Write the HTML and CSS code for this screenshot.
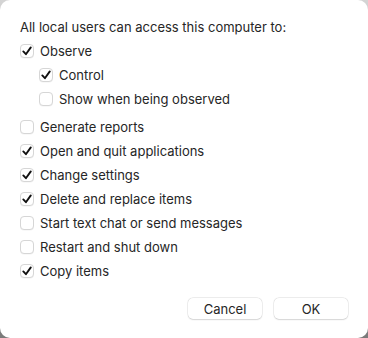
FILE: index.html
```html
<!DOCTYPE html>
<html lang="en">
<head>
    <meta charset="utf-8" />
    <title>Remote Management Access</title>
    <link rel="stylesheet" href="styles.css">
</head>
<body>
<div class="sheet">
    <p class="lead">All local users can access this computer to:</p>
    <ul class="options">
        <li class="opt on">Observe</li>
        <li class="opt sub on">Control</li>
        <li class="opt sub">Show when being observed</li>
        <li class="opt gap">Generate reports</li>
        <li class="opt on">Open and quit applications</li>
        <li class="opt on">Change settings</li>
        <li class="opt on">Delete and replace items</li>
        <li class="opt">Start text chat or send messages</li>
        <li class="opt">Restart and shut down</li>
        <li class="opt on">Copy items</li>
    </ul>
    <div class="actions">
        <button class="btn">Cancel</button>
        <button class="btn">OK</button>
    </div>
</div>
</body>
</html>
```

FILE: styles.css
```css
html, body {
    margin: 0;
    height: 100%;
}
body {
    background: linear-gradient(#d4d4d4, #7a7a7a);
    font-family: Inter, "Liberation Sans", sans-serif;
    font-size: 13px;
    color: #262626;
}
.sheet {
    box-sizing: border-box;
    height: 100%;
    background: #fff;
    border-radius: 10px;
    padding: 18px 20px 19px 20px;
    display: flex;
    flex-direction: column;
}
.lead {
    margin: 0 0 3px;
    line-height: 18px;
}
.options {
    list-style: none;
    margin: 0;
    padding: 0;
}
.opt {
    display: flex;
    align-items: center;
    gap: 6px;
    height: 24px;
}
.opt::before {
    content: "";
    box-sizing: border-box;
    width: 14px;
    height: 14px;
    border: 1px solid #d6d6d6;
    border-radius: 4px;
    background: #fff;
    box-shadow: 0 0.5px 0.5px rgba(0,0,0,0.06);
}
.opt.on::before {
    background: #fff url("data:image/svg+xml;utf8,<svg xmlns='http://www.w3.org/2000/svg' viewBox='0 0 14 14'><path d='M3.3 7.4 L5.9 10.2 L10.8 3.4' fill='none' stroke='%23111' stroke-width='1.9' stroke-linecap='round' stroke-linejoin='round'/></svg>") center / 14px 14px no-repeat;
}
.sub {
    padding-left: 19px;
}
.gap {
    margin-top: 4px;
}
.actions {
    margin-top: auto;
    display: flex;
    justify-content: flex-end;
    gap: 12px;
}
.btn {
    width: 74px;
    height: 21px;
    padding: 0;
    border: none;
    border-radius: 5px;
    background: #fff;
    box-shadow: 0 0 0 0.5px rgba(0,0,0,0.1), 0 0.5px 1.5px rgba(0,0,0,0.12);
    font: inherit;
    color: #262626;
}
```
